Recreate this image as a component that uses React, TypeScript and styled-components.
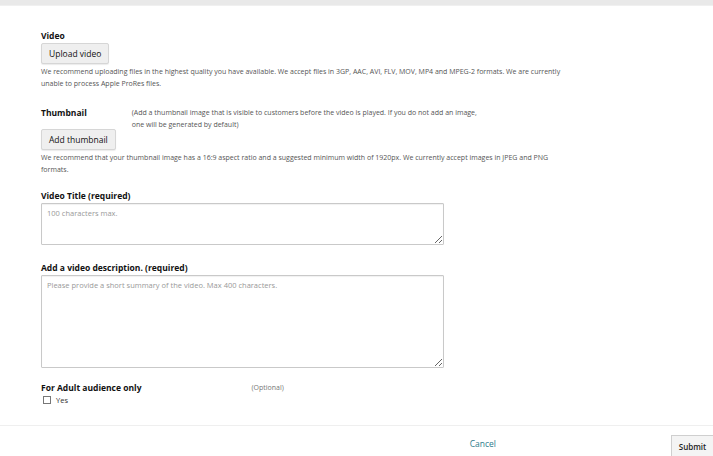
import React from 'react';
import styled, { createGlobalStyle } from 'styled-components';

const GlobalStyle = createGlobalStyle`
  html, body {
    margin: 0;
    padding: 0;
    background: #ffffff;
    font-family: "Open Sans", "Noto Sans", Arial, sans-serif;
    color: #111;
  }
`;

const Page = styled.div`
  width: 713px;
  height: 456px;
  overflow: hidden;
  display: flex;
  flex-direction: column;
`;

const TopBar = styled.div`
  height: 5px;
  background: #e9e9e9;
  border-bottom: 1px solid #f0f0f0;
`;

const Form = styled.div`
  padding: 23px 0 0 41px;
  display: flex;
  flex-direction: column;
`;

const Label = styled.div<{ $top?: number }>`
  font-size: 8.5px;
  font-weight: 700;
  line-height: 14px;
  color: #111;
  margin-top: ${p => p.$top ?? 0}px;
`;

const GrayButton = styled.button<{ $top?: number }>`
  align-self: flex-start;
  height: 21px;
  padding: 0 7px;
  margin-top: ${p => p.$top ?? 0}px;
  font-family: inherit;
  font-size: 8.5px;
  color: #111;
  background: #efefef;
  border: 1px solid #d6d6d6;
  border-radius: 2px;
  box-shadow: 0 1px 1px rgba(0, 0, 0, 0.08);
`;

const Help = styled.p`
  margin: 2px 0 0;
  font-size: 7px;
  line-height: 12px;
  color: #555;
  width: 530px;
`;

const LabelRow = styled.div<{ $top?: number; $gap: number }>`
  display: flex;
  align-items: flex-start;
  gap: ${p => p.$gap}px;
  margin-top: ${p => p.$top ?? 0}px;
`;

const Aside = styled.span`
  font-size: 7px;
  line-height: 12px;
  color: #555;
  width: 352px;
  padding-top: 1px;
`;

const Optional = styled.span`
  font-size: 7px;
  line-height: 14px;
  color: #777;
`;

const TextArea = styled.textarea<{ $height: number }>`
  width: 403px;
  height: ${p => p.$height}px;
  box-sizing: border-box;
  padding: 4px 5px;
  font-family: inherit;
  font-size: 7.5px;
  border: 1px solid #c9c9c9;
  border-radius: 1px;
  box-shadow: inset 0 1px 1px rgba(0, 0, 0, 0.06);
  resize: vertical;
  outline: none;

  &::placeholder {
    color: #999;
  }
`;

const CheckRow = styled.label`
  display: flex;
  align-items: center;
  gap: 5px;
  font-size: 7.5px;
  color: #333;
  line-height: 10px;
`;

const Box = styled.span`
  width: 6px;
  height: 6px;
  border: 1px solid #777;
  margin-left: 2px;
`;

const Footer = styled.div`
  margin-top: 20px;
  border-top: 1px solid #efefef;
  display: flex;
  justify-content: flex-end;
  align-items: flex-end;
  height: 31px;
  gap: 173px;
`;

const Cancel = styled.a`
  font-size: 8.5px;
  color: #2e7c8c;
  margin-bottom: 7px;
  margin-right: 2px;
  text-decoration: none;
`;

const Submit = styled.button`
  height: 21px;
  width: 42px;
  padding: 0;
  font-family: inherit;
  font-size: 8px;
  font-weight: 600;
  color: #222;
  background: #f4f4f4;
  border: 1px solid #cfcfcf;
  border-right: none;
  border-bottom: none;
`;

export default function App() {
  return (
    <Page>
      <GlobalStyle />
      <TopBar />
      <Form>
        <Label>Video</Label>
        <GrayButton>Upload video</GrayButton>
        <Help>
          We recommend uploading files in the highest quality you have available. We accept files in 3GP, AAC, AVI,
          FLV, MOV, MP4 and MPEG-2 formats. We are currently unable to process Apple ProRes files.
        </Help>

        <LabelRow $top={16} $gap={45}>
          <Label>Thumbnail</Label>
          <Aside>
            (Add a thumbnail image that is visible to customers before the video is played. If you do not add an
            image, one will be generated by default)
          </Aside>
        </LabelRow>
        <GrayButton $top={-2}>Add thumbnail</GrayButton>
        <Help>
          We recommend that your thumbnail image has a 16:9 aspect ratio and a suggested minimum width of 1920px. We
          currently accept images in JPEG and PNG formats.
        </Help>

        <Label $top={13}>Video Title (required)</Label>
        <TextArea $height={42} placeholder="100 characters max." />

        <Label $top={16}>Add a video description. (required)</Label>
        <TextArea $height={93} placeholder="Please provide a short summary of the video. Max 400 characters." />

        <LabelRow $top={13} $gap={110}>
          <Label>For Adult audience only</Label>
          <Optional>(Optional)</Optional>
        </LabelRow>
        <CheckRow>
          <Box />
          Yes
        </CheckRow>
      </Form>
      <Footer>
        <Cancel href="#">Cancel</Cancel>
        <Submit>Submit</Submit>
      </Footer>
    </Page>
  );
}
